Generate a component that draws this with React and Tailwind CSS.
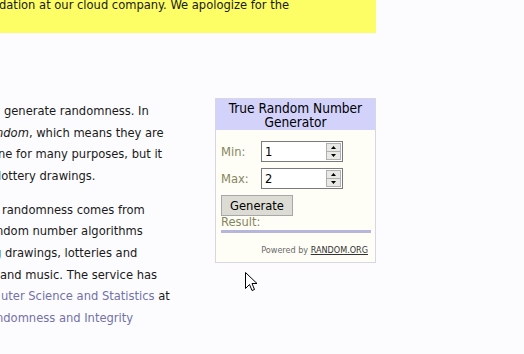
export default function App() {
  const font = { fontFamily: '"DejaVu Sans Condensed", "DejaVu Sans", Verdana, sans-serif' };
  const Line = ({ ml, children }) => (
    <div className={`whitespace-nowrap h-[21.6px] leading-[21.6px] ${ml}`}>{children}</div>
  );
  return (
    <div
      className="relative w-[524px] h-[354px] overflow-hidden bg-[#fcfcfe] text-[#1a1a1a] text-[12.8px]"
      style={font}
    >
      <div className="w-[376px] h-[33px] bg-[#fdfd66] overflow-hidden">
        <div className="whitespace-nowrap -mt-[6px] leading-[21.6px] -ml-[1px]">
          dation at our cloud company. We apologize for the
        </div>
      </div>
      <div className="flex mt-[65px]">
        <div className="w-[215px] pt-[2px] overflow-hidden">
          <Line ml="-ml-[7px]">n generate randomness. In</Line>
          <Line ml="-ml-[4px]">
            <i>ndom</i>, which means they are
          </Line>
          <Line ml="-ml-[2px]">ne for many purposes, but it</Line>
          <Line ml="-ml-[2px]">lottery drawings.</Line>
          <div className="h-[12.4px]" />
          <Line ml="ml-[2px]"> randomness comes from</Line>
          <Line ml="-ml-[4px]">ndom number algorithms</Line>
          <Line ml="-ml-[6px]">g drawings, lotteries and</Line>
          <Line ml="ml-[0px]">and music. The service has</Line>
          <Line ml="ml-[1px]">
            <span className="text-[#7272a8]">uter Science and Statistics</span> at
          </Line>
          <Line ml="-ml-[4px]">
            <span className="text-[#7272a8]">ndomness and Integrity</span>
          </Line>
        </div>
        <div className="w-[161px] h-[165px] border border-[#d6d6e4] bg-[#fefef6] flex flex-col">
          <div className="h-[31px] bg-[#d2d2fa] text-[13.6px] leading-[14px] text-center pt-[2px] text-black whitespace-nowrap">
            <div>True Random Number</div>
            <div>Generator</div>
          </div>
          <div className="px-[5px] pt-[11px] text-[#86865e]">
            <div className="flex items-center h-[21px]">
              <span className="w-[40px]">Min:</span>
              <div className="flex items-center w-[82px] h-[21px] border border-[#7a7a7a] bg-white text-black pl-[3px]">
                <span className="flex-1">1</span>
                <Spinner />
              </div>
            </div>
            <div className="flex items-center h-[21px] mt-[6px]">
              <span className="w-[40px]">Max:</span>
              <div className="flex items-center w-[82px] h-[21px] border border-[#7a7a7a] bg-white text-black pl-[3px]">
                <span className="flex-1">2</span>
                <Spinner />
              </div>
            </div>
            <div className="mt-[6px] w-[72px] h-[21px] border border-[#a8a8a8] bg-[#dcdcd4] text-black flex items-center justify-center">
              Generate
            </div>
            <div className="leading-[14px] -mt-[1px]">Result:</div>
            <div className="mt-[1px] h-[3px] bg-[#b6b6dc] w-[150px]" />
            <div className="text-right text-[9px] text-[#6a6a6a] mt-[11px] pr-[2px] whitespace-nowrap">
              Powered by <span className="underline text-[#333]">RANDOM.ORG</span>
            </div>
          </div>
        </div>
      </div>
      <svg
        className="absolute left-[245px] top-[272px]"
        width="13"
        height="21"
        viewBox="0 0 13 21"
      >
        <path
          d="M0.5 0.5 L0.5 16.5 L4.5 12.5 L7 18.5 L9.5 17.5 L7 11.5 L12 11.5 Z"
          fill="white"
          stroke="black"
          strokeWidth="1"
          strokeLinejoin="miter"
        />
      </svg>
    </div>
  );
}

function Spinner() {
  return (
    <div className="w-[15px] h-[17px] mr-[1px] flex flex-col border border-[#b0b0b0] bg-[#e8e8e4]">
      <div className="flex-1 flex items-center justify-center border-b border-[#b0b0b0]">
        <svg width="5" height="3" viewBox="0 0 5 3">
          <path d="M2.5 0 L5 3 L0 3 Z" fill="black" />
        </svg>
      </div>
      <div className="flex-1 flex items-center justify-center">
        <svg width="5" height="3" viewBox="0 0 5 3">
          <path d="M0 0 L5 0 L2.5 3 Z" fill="black" />
        </svg>
      </div>
    </div>
  );
}
